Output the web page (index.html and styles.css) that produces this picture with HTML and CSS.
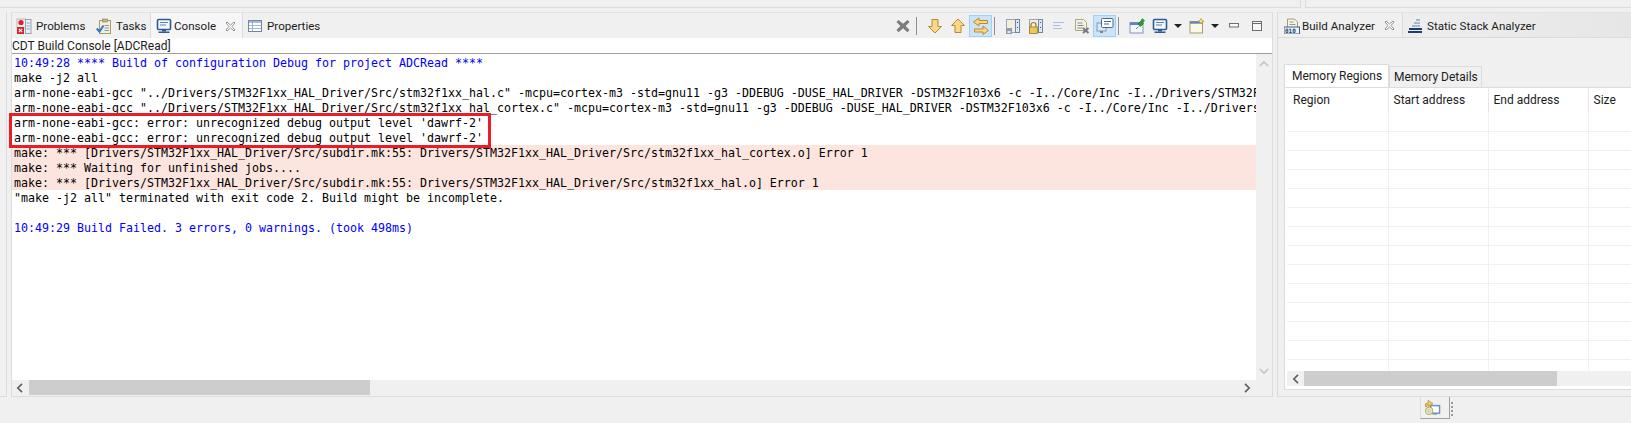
FILE: index.html
```html
<!DOCTYPE html>
<html lang="en">
<head>
<meta charset="utf-8">
<title>STM32CubeIDE Console</title>
<link rel="stylesheet" href="styles.css">
</head>
<body>
<div class="top"><div class="top-a"></div><div class="top-b"></div></div>
<div class="work">
  <div class="stub"></div>
  <section class="main">
    <div class="tabbar">
      <div class="tab t-problems">
        <svg class="ico" viewBox="0 0 16 16"><rect x="1" y="1" width="9" height="9" fill="#f4eeee" stroke="#b9a9a9" stroke-width=".8"/><circle cx="5" cy="4.5" r="2.6" fill="#d8232a"/><rect x="1" y="9" width="7" height="7" fill="#d8232a"/><path d="M2.8 10.8l3.4 3.4M6.2 10.8l-3.4 3.4" stroke="#fff" stroke-width="1.1"/><rect x="9.5" y="1.5" width="5.5" height="14" fill="#eef2f7" stroke="#8fa3bd"/><path d="M10.5 5h3.5M10.5 8h3.5M10.5 11h3.5" stroke="#8fa3bd"/></svg>
        <span>Problems</span>
      </div>
      <div class="tab t-tasks">
        <svg class="ico" viewBox="0 0 16 16"><rect x="3.5" y="2.5" width="11" height="13" fill="#f3efe0" stroke="#a99a70"/><rect x="6.5" y="1" width="5" height="3" fill="#c0b48c" stroke="#8d8058" stroke-width=".6"/><path d="M8.5 7.5h4.500M8.500 10h4.500M8.500 12.500h4.500" stroke="#8b98a8"/><path d="M.8 10.500l2.700 3 4-6" fill="none" stroke="#2d74c4" stroke-width="2"/></svg>
        <span>Tasks</span>
      </div>
      <div class="tab active t-console">
        <svg class="ico" viewBox="0 0 16 16"><rect x="1.500" y="1.500" width="13" height="10" rx="1" fill="#f4f8fc" stroke="#2f5b94" stroke-width="1.600"/><path d="M4 4.500h8M4 7h6" stroke="#5d7fa8"/><rect x="6" y="12" width="4" height="1.500" fill="#2f5b94"/><rect x="2.500" y="13.500" width="11" height="1.500" fill="#2f5b94"/></svg>
        <span>Console</span>
        <svg class="close" viewBox="0 0 11 11"><path d="M2 1l3.500 3 3.500-3 1 1-3 3.500 3 3.500-1 1-3.500-3-3.500 3-1-1 3-3.500-3-3.500z" fill="#fff" stroke="#7a7a7a" stroke-width=".8"/></svg>
      </div>
      <div class="tab t-props">
        <svg class="ico" viewBox="0 0 16 16"><rect x="1.500" y="2.500" width="13" height="11" fill="#fff" stroke="#6f88a8"/><rect x="2" y="3" width="12" height="2" fill="#a9bcd3"/><path d="M5.500 3v10M2 7.500h12M2 10.500h12" stroke="#8fa3bd" stroke-width=".8"/></svg>
        <span>Properties</span>
      </div>
      <div class="tools">
        <button class="tool wide"><svg viewBox="0 0 16 16"><path d="M3 1l5 4.500L13 1l2.500 2.500L11 8l4.500 4.500L13 15l-5-4.500L3 15 .5 12.500 5 8 .5 3.500z" fill="#7d7d7d"/></svg></button>
        <i class="sep"></i>
        <button class="tool"><svg viewBox="0 0 16 16"><path d="M5 1.500h6v7h3.500L8 15 1.500 8.500H5z" fill="#fbd78a" stroke="#b88a2c"/></svg></button>
        <button class="tool"><svg viewBox="0 0 16 16"><path d="M5 14.500h6v-7h3.500L8 1 1.500 7.500H5z" fill="#fbd78a" stroke="#b88a2c"/></svg></button>
        <button class="tool on"><svg viewBox="0 0 18 18"><path d="M7 1L1.500 5 7 9V6.500h8.500v-3H7z" fill="#fbd78a" stroke="#b88a2c"/><path d="M11 9l5.500 4.500L11 17.500V15H2.500v-3H11z" fill="#fbd78a" stroke="#b88a2c"/></svg></button>
        <i class="sep"></i>
        <button class="tool"><svg viewBox="0 0 16 16"><rect x="1.500" y="1.500" width="13" height="13" fill="#f3efe0" stroke="#9aa5b3"/><rect x="10.500" y="1.500" width="4" height="13" fill="#dfe7f0" stroke="#6f88a8"/><path d="M12.500 4v1M12.500 9v1" stroke="#33527a"/><rect x="1" y="10" width="6" height="6" fill="#8d9db3"/><rect x="2.500" y="13" width="3" height="2" fill="#e3e8ee"/></svg></button>
        <button class="tool"><svg viewBox="0 0 16 16"><rect x="1.500" y="1.500" width="13" height="13" fill="#f3efe0" stroke="#9aa5b3"/><rect x="10.500" y="1.500" width="4" height="13" fill="#dfe7f0" stroke="#6f88a8"/><path d="M12.500 4v1M12.500 9v1" stroke="#33527a"/><path d="M3 9V7a2.500 2.500 0 015 0v2" fill="none" stroke="#9a7a2c" stroke-width="1.200"/><rect x="1.500" y="9" width="8" height="6.500" fill="#f0c659" stroke="#9a7a2c" stroke-width=".8"/></svg></button>
        <button class="tool"><svg viewBox="0 0 16 16"><path d="M2 4.500h11M2 7.500h7M2 10.500h9" stroke="#a9bfe0" stroke-width="1.200"/></svg></button>
        <button class="tool"><svg viewBox="0 0 16 16"><path d="M1.500 1.500h8l3 3v8h-11z" fill="#f5f0e0" stroke="#b3a67c"/><path d="M3.500 5h5M3.500 7.500h6M3.500 10h5" stroke="#7f8da0"/><path d="M9 10l5.500 5M14.500 10L9 15" stroke="#717a85" stroke-width="2"/></svg></button>
        <button class="tool on"><svg viewBox="0 0 18 18"><rect x="1" y="6" width="9" height="8" fill="#dfe8f2" stroke="#7d97b8"/><rect x="4" y="14" width="3" height="2" fill="#6f88a8"/><rect x="5.500" y="1.500" width="11.500" height="9" rx="1" fill="#fff" stroke="#47678f"/><path d="M8 4.500h7M8 7h5" stroke="#47678f"/></svg></button>
        <i class="sep"></i>
        <button class="tool"><svg viewBox="0 0 16 16"><rect x="1" y="4.500" width="13" height="10.500" fill="#f3f6fa" stroke="#7d97b8"/><rect x="1" y="4.500" width="13" height="2.500" fill="#5a86bb"/><path d="M9 6l3-3 2.500 2.500-3 3z" fill="#2f9a3d" stroke="#1c6a2a" stroke-width=".7"/><path d="M7 11l2.500-2.500" stroke="#7d8a95"/><rect x="12" y="1" width="3.500" height="3" fill="#2f9a3d" transform="rotate(45 13.750 2.500)"/></svg></button>
        <button class="tool narrow"><svg viewBox="0 0 16 16"><rect x="1.500" y="1.500" width="13" height="10" rx="1" fill="#f4f8fc" stroke="#2f5b94" stroke-width="1.600"/><path d="M4 4.500h8M4 7h6" stroke="#5d7fa8"/><rect x="6" y="12" width="4" height="1.500" fill="#2f5b94"/><rect x="2.500" y="13.500" width="11" height="1.500" fill="#2f5b94"/></svg></button>
        <button class="drop"></button>
        <button class="tool"><svg viewBox="0 0 16 16"><rect x="1" y="3.500" width="12.500" height="11.500" fill="#fbf8e6" stroke="#a99a70"/><rect x="1" y="3.500" width="12.500" height="2.200" fill="#5a86bb"/><path d="M12 .5l1 2 2 .7-2 .8-1 2-1-2-2-.8 2-.7z" fill="#fde79a" stroke="#c69a2c" stroke-width=".8"/></svg></button>
        <button class="drop"></button>
        <button class="win"><svg viewBox="0 0 12 12"><rect x="1.500" y="3.500" width="9" height="3.500" fill="#f8f8f8" stroke="#6e6e6e"/></svg></button>
        <button class="win"><svg viewBox="0 0 12 12"><rect x="1.500" y="1.500" width="9" height="9" fill="#f8f8f8" stroke="#6e6e6e"/><path d="M1.500 3.500h9" stroke="#6e6e6e"/></svg></button>
      </div>
    </div>
    <div class="title">CDT Build Console [ADCRead]</div>
    <div class="console">
      <div class="output">
        <div class="out info">10:49:28 **** Build of configuration Debug for project ADCRead ****</div>
        <div class="out">make -j2 all</div>
        <div class="out">arm-none-eabi-gcc "../Drivers/STM32F1xx_HAL_Driver/Src/stm32f1xx_hal.c" -mcpu=cortex-m3 -std=gnu11 -g3 -DDEBUG -DUSE_HAL_DRIVER -DSTM32F103x6 -c -I../Core/Inc -I../Drivers/STM32F</div>
        <div class="out">arm-none-eabi-gcc "../Drivers/STM32F1xx_HAL_Driver/Src/stm32f1xx_hal_cortex.c" -mcpu=cortex-m3 -std=gnu11 -g3 -DDEBUG -DUSE_HAL_DRIVER -DSTM32F103x6 -c -I../Core/Inc -I../Drivers</div>
        <div class="out">arm-none-eabi-gcc: error: unrecognized debug output level 'dawrf-2'</div>
        <div class="out">arm-none-eabi-gcc: error: unrecognized debug output level 'dawrf-2'</div>
        <div class="out err">make: *** [Drivers/STM32F1xx_HAL_Driver/Src/subdir.mk:55: Drivers/STM32F1xx_HAL_Driver/Src/stm32f1xx_hal_cortex.o] Error 1</div>
        <div class="out err">make: *** Waiting for unfinished jobs....</div>
        <div class="out err">make: *** [Drivers/STM32F1xx_HAL_Driver/Src/subdir.mk:55: Drivers/STM32F1xx_HAL_Driver/Src/stm32f1xx_hal.o] Error 1</div>
        <div class="out">"make -j2 all" terminated with exit code 2. Build might be incomplete.</div>
        <div class="out">&nbsp;</div>
        <div class="out info">10:49:29 Build Failed. 3 errors, 0 warnings. (took 498ms)</div>
      </div>
      <div class="vbar">
        <svg class="chev" viewBox="0 0 12 8"><path d="M1 7l5-5 5 5" fill="none" stroke="#c4c4c4" stroke-width="2"/></svg>
        <svg class="chev" viewBox="0 0 12 8"><path d="M1 1l5 5 5-5" fill="none" stroke="#c4c4c4" stroke-width="2"/></svg>
      </div>
      <div class="hbar">
        <svg class="chev-h" viewBox="0 0 8 12"><path d="M7 1L2 6l5 5" fill="none" stroke="#5f5f5f" stroke-width="2"/></svg>
        <div class="thumb main-thumb"></div>
        <svg class="chev-h end" viewBox="0 0 8 12"><path d="M1 1l5 5-5 5" fill="none" stroke="#5f5f5f" stroke-width="2"/></svg>
      </div>
      <div class="corner"></div>
    </div>
    <div class="mark"></div>
  </section>
  <section class="side">
    <div class="tabbar side-tabs">
      <div class="tab active build">
        <svg class="ico" viewBox="0 0 16 16"><path d="M3.500 1h7l3 3v6h-10z" fill="#f7f3e3" stroke="#a99a70"/><path d="M5.500 4h4M5.500 6.500h6" stroke="#8b98a8"/><rect x="0" y="9" width="15.500" height="7" fill="#eef3f8" stroke="#39608f"/><text x="1" y="15" class="bits">010</text></svg>
        <span>Build Analyzer</span>
        <svg class="close" viewBox="0 0 11 11"><path d="M2 1l3.500 3 3.500-3 1 1-3 3.500 3 3.500-1 1-3.500-3-3.500 3-1-1 3-3.500-3-3.500z" fill="#fff" stroke="#7a7a7a" stroke-width=".8"/></svg>
      </div>
      <div class="tab stack">
        <svg class="ico" viewBox="0 0 16 16"><path d="M9 2h4M7 5h6M5 8h8" stroke="#8fa8c8" stroke-width="1.500"/><path d="M2 11h13M1 14h14" stroke="#1f3f6e" stroke-width="2"/></svg>
        <span>Static Stack Analyzer</span>
      </div>
    </div>
    <div class="pane">
      <div class="inner-tabs">
        <div class="itab sel">Memory Regions</div>
        <div class="itab">Memory Details</div>
      </div>
      <div class="box">
        <div class="table-wrap">
          <table>
            <thead><tr><th>Region</th><th>Start address</th><th>End address</th><th>Size</th></tr></thead>
            <tbody>
              <tr><td></td><td></td><td></td><td></td></tr>
              <tr><td></td><td></td><td></td><td></td></tr>
              <tr><td></td><td></td><td></td><td></td></tr>
              <tr><td></td><td></td><td></td><td></td></tr>
              <tr><td></td><td></td><td></td><td></td></tr>
              <tr><td></td><td></td><td></td><td></td></tr>
              <tr><td></td><td></td><td></td><td></td></tr>
              <tr><td></td><td></td><td></td><td></td></tr>
              <tr><td></td><td></td><td></td><td></td></tr>
              <tr><td></td><td></td><td></td><td></td></tr>
              <tr><td></td><td></td><td></td><td></td></tr>
              <tr><td></td><td></td><td></td><td></td></tr>
              <tr><td></td><td></td><td></td><td></td></tr>
              <tr><td></td><td></td><td></td><td></td></tr>
            </tbody>
          </table>
        </div>
        <div class="hbar side-bar">
          <svg class="chev-h" viewBox="0 0 8 12"><path d="M7 1L2 6l5 5" fill="none" stroke="#5f5f5f" stroke-width="2"/></svg>
          <div class="thumb side-thumb"></div>
        </div>
      </div>
    </div>
  </section>
</div>
<footer class="status">
  <div class="trim">
    <svg viewBox="0 0 18 18"><rect x="7" y="7" width="9.500" height="8" fill="#fff" stroke="#6f8fbe" stroke-width="1.500"/><rect x="9" y="15" width="5" height="1.500" fill="#6f8fbe"/><circle cx="5.500" cy="12.500" r="4" fill="#e8e6b8" stroke="#a8a860"/><circle cx="5.500" cy="12.500" r="1.200" fill="#fff" stroke="#8a9aa8" stroke-width=".6"/><path d="M1.500 8V5l3-1V1.500l5 3.500-5 3V6l-1.500.5V8z" fill="#f3c868" stroke="#b88a2c" stroke-width=".8"/></svg>
  </div>
  <div class="grip"></div>
</footer>
</body>
</html>
```

FILE: styles.css
```css
* { box-sizing: border-box; }
html, body { margin: 0; padding: 0; }
body {
  width: 1631px;
  height: 423px;
  overflow: hidden;
  background: #f0f0f0;
  color: #1c1c1c;
  font: 12px/16px Roboto, "Liberation Sans", sans-serif;
  display: flex;
  flex-direction: column;
}
.top { height: 8px; display: flex; flex: none; }
.top-a { width: 1301px; border-bottom: 1px solid #dcdcdc; border-right: 1px solid #dcdcdc; }
.top-b { flex: 1; margin-left: 4px; border-bottom: 1px solid #dcdcdc; border-left: 1px solid #dcdcdc; }
.work {
  height: 389px;
  flex: none;
  padding-top: 4px;
  display: flex;
  gap: 4px;
}
.stub { width: 7px; border-right: 1px solid #dcdcdc; border-bottom: 1px solid #dcdcdc; }
.main {
  width: 1262px;
  position: relative;
  display: flex;
  flex-direction: column;
  border: 1px solid #dcdcdc;
  border-top-color: #e2e2e2;
}
.tabbar {
  height: 25px;
  flex: none;
  display: flex;
  align-items: stretch;
}
.tab {
  display: flex;
  align-items: center;
  padding: 1px 0 0 4px;
  font-size: 11.6px;
  white-space: nowrap;
  flex: none;
}
.tab .ico { width: 16px; height: 16px; margin-right: 4px; flex: none; }
.t-problems { width: 80px; }
.t-tasks { width: 58px; }
.t-console { width: 93px; }
.t-props { width: 90px; }
.tab.active {
  background: #f6f6f6;
  border-left: 1px solid #dcdcdc;
  border-right: 1px solid #dcdcdc;
  padding: 1px 0 0 5px;
}
.t-console .ico { margin-right: 2px; }
.close { width: 11px; height: 11px; margin: 0 6px 0 auto; }
.tools { margin-left: auto; display: flex; align-items: center; padding-right: 4px; }
.tool, .win, .drop {
  border: 0;
  padding: 0;
  background: none;
  display: flex;
  align-items: center;
  justify-content: center;
}
.tool { width: 23px; height: 22px; }
.tool svg { width: 16px; height: 16px; }
.tool.wide svg { width: 14px; height: 14px; }
.tool.on { background: #cde4f7; border: 1px solid #99d1ff; }
.tool.on svg { width: 18px; height: 18px; }
.sep { width: 1px; height: 18px; margin: 0 6px 0 2px; background: #8f8f8f; }
.tool.narrow { width: 23px; }
.drop { width: 14px; height: 22px; position: relative; }
.drop::after {
  content: "";
  border-left: 4px solid transparent;
  border-right: 4px solid transparent;
  border-top: 4px solid #222;
}
.win { width: 23px; height: 22px; }
.win svg { width: 12px; height: 12px; }
.title {
  height: 16px;
  flex: none;
  background: #fff;
  border-bottom: 1px solid #a0a0a0;
  line-height: 17px;
}
.console {
  flex: 1;
  min-height: 0;
  display: grid;
  grid-template-columns: 1fr 16px;
  grid-template-rows: 1fr 15px;
  padding-bottom: 1px;
  background: #f0f0f0;
}
.output {
  overflow: hidden;
  padding-top: 1px;
  background: #fff;
  font-family: "DejaVu Sans Mono", "Liberation Mono", monospace;
  font-size: 11.63px;
  line-height: 17px;
  color: #000;
}
.out { white-space: pre; padding-left: 2px; height: 15px; }
.info { color: #0000ff; }
.err { background: #fde5df; }
.vbar {
  background: #f0f0f0;
  display: flex;
  flex-direction: column;
  justify-content: space-between;
  align-items: center;
  padding: 6px 0 5px;
}
.chev { width: 10px; height: 7px; }
.hbar { display: flex; align-items: center; background: #f0f0f0; height: 15px; }
.chev-h { width: 7px; height: 10px; margin: 0 6px 0 4px; flex: none; }
.chev-h.end { margin: 0 5px 0 auto; }
.thumb { height: 15px; background: #cdcdcd; flex: none; }
.main-thumb { width: 341px; }
.corner { background: #f0f0f0; }
.mark {
  position: absolute;
  left: -3px;
  top: 100px;
  width: 482px;
  height: 35px;
  border: 3px solid #ed1c24;
}
.side {
  flex: 1;
  min-width: 0;
  display: flex;
  flex-direction: column;
  border-left: 1px solid #dcdcdc;
  border-top: 1px solid #e2e2e2;
  border-bottom: 1px solid #dcdcdc;
}
.side-tabs { background: linear-gradient(90deg, #f0f0f0 20%, #e6e6e6 100%); border-bottom: 1px solid #dcdcdc; }
.tab.build { width: 125px; border-left: 0; background: #f0f0f0; padding-left: 6px; }
.tab.build .ico { margin-right: 2px; }
.tab.build .close { margin-right: 7px; }
.stack { padding-left: 4px; }
.bits { font: 700 6px "DejaVu Sans Mono", monospace; fill: #1f3f6e; }
.pane {
  flex: 1;
  min-height: 0;
  padding: 26px 0 6px 6px;
  display: flex;
  flex-direction: column;
}
.inner-tabs { display: flex; align-items: flex-end; height: 23px; flex: none; }
.itab {
  height: 21px;
  line-height: 21px;
  padding: 0 3px 0 4px;
  border: 1px solid #dcdcdc;
  border-bottom: 0;
  background: #f0f0f0;
}
.itab.sel { height: 23px; width: 105px; padding: 0 0 0 7px; background: #fff; line-height: 22px; }
.box {
  flex: 1;
  min-height: 0;
  background: #fff;
  border: 1px solid #dcdcdc;
  border-right: 0;
  padding: 0 0 3px 2px;
  display: flex;
  flex-direction: column;
}
.table-wrap { flex: 1; min-height: 0; overflow: hidden; }
table { border-collapse: collapse; table-layout: fixed; width: 401px; }
th {
  width: 100px;
  height: 24px;
  padding: 0 0 0 5px;
  font-weight: 400;
  text-align: left;
  border-right: 1px solid #e6e6e6;
}
th:first-child { width: 101px; padding-left: 6px; }
td { height: 19px; padding: 0; border-right: 1px solid #f0f0f0; border-bottom: 1px solid #f0f0f0; }
.side-bar .chev-h { margin: 0 5px 0 5px; }
.side-thumb { width: 253px; }
.status { flex: 1; display: flex; justify-content: flex-end; padding-right: 178px; }
.trim {
  width: 30px;
  height: 22px;
  padding-left: 3px;
  border-right: 1px solid #a0a0a0;
  border-bottom: 1px solid #a0a0a0;
  border-left: 1px solid #dcdcdc;
  display: flex;
  align-items: center;
}
.trim svg { width: 17px; height: 17px; }
.grip {
  width: 2px;
  height: 16px;
  margin: 5px 0 0 1px;
  background: repeating-linear-gradient(#9a9a9a 0 2px, transparent 2px 4px);
}
```
